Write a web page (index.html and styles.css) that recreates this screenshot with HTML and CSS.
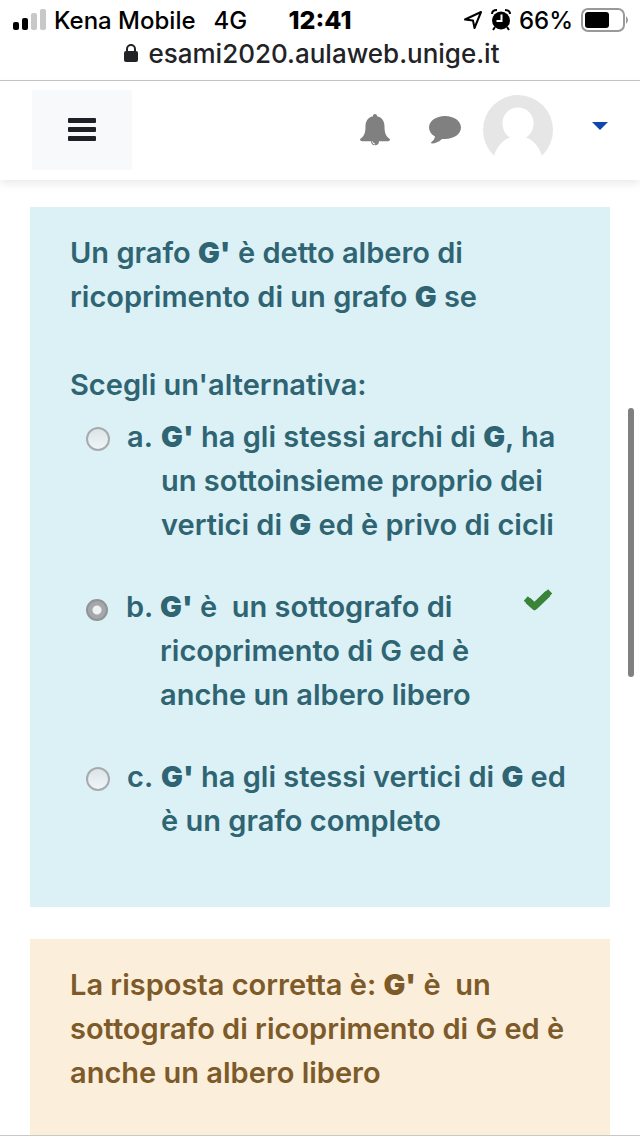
FILE: index.html
```html
<!DOCTYPE html>
<html lang="it">
<head>
<meta charset="utf-8">
<meta name="viewport" content="width=device-width, initial-scale=1">
<title>esami2020.aulaweb.unige.it</title>
<link rel="stylesheet" href="styles.css">
</head>
<body>
<div class="screen">
  <header class="browser">
    <div class="status">
      <div class="status-side">
        <svg class="signal" width="34" height="22" viewBox="0 0 34 22" aria-hidden="true">
          <rect x="1" y="13" width="6" height="8" rx="2"/>
          <rect x="10" y="9" width="6" height="12" rx="2"/>
          <rect x="19" y="4" width="6" height="17" rx="2" fill="#c8c8c8"/>
          <rect x="28" y="0" width="6" height="21" rx="2" fill="#c8c8c8"/>
        </svg>
        <span>Kena Mobile</span>
        <span class="network">4G</span>
      </div>
      <span class="clock">12:41</span>
      <div class="status-side status-end">
        <svg width="20" height="20" viewBox="0 0 20 20" aria-hidden="true"><path d="M18 2 11.500 18 10 10.500 2 9.500Z" fill="none" stroke="#000" stroke-width="2" stroke-linejoin="round"/></svg>
        <svg width="20" height="22" viewBox="0 0 20 22" aria-hidden="true">
          <circle cx="10" cy="11.500" r="9"/>
          <path d="M1 5Q1 1 6 1M19 5Q19 1 14 1M4 18l-2 3M16 18l2 3" fill="none" stroke="#000" stroke-width="2"/>
          <path d="M10.500 5.500V12H5.500" fill="none" stroke="#fff" stroke-width="2"/>
        </svg>
        <span>66%</span>
        <svg width="47" height="24" viewBox="0 0 47 24" aria-hidden="true">
          <rect x="1" y="1" width="42" height="22" rx="6" fill="none" stroke="#999" stroke-width="2"/>
          <rect x="4" y="4" width="24" height="16" rx="3"/>
          <path d="M45 8q4 4 0 8z" fill="#999"/>
        </svg>
      </div>
    </div>
    <div class="address">
      <svg width="14" height="18" viewBox="0 0 14 18" aria-hidden="true"><rect x="0" y="7" width="14" height="11" rx="2" fill="#222326"/><path d="M3 8V5a4 4 0 0 1 8 0v3" fill="none" stroke="#222326" stroke-width="2"/></svg>
      <span>esami2020.aulaweb.unige.it</span>
    </div>
  </header>

  <nav class="navbar">
    <button class="menu" type="button" aria-label="Menu">
      <svg width="28" height="24" viewBox="0 0 28 24" fill="#1d2125"><rect y="0" width="28" height="5" rx="1"/><rect y="9" width="28" height="5" rx="1"/><rect y="18" width="28" height="5" rx="1"/></svg>
    </button>
    <div class="tools">
      <button class="bell" type="button" aria-label="Notifiche">
        <svg width="30" height="32" viewBox="0 0 30 32"><path d="M15 0c1.500 0 2.300 1 2 2.300 5 1 7.500 5 7.500 10 0 7 1.500 10 5.500 13 0 1.300-1 2-2 2H19a4 4 0 0 1-8 0H2c-1 0-2-.7-2-2 4-3 5.500-6 5.500-13 0-5 2.500-9 7.500-10C12.700 1 13.500 0 15 0Z" fill="#808080"/><path d="M12.500 27.500a2.500 2.500 0 0 0 2.500 2.500" fill="none" stroke="#fff" stroke-width="1"/></svg>
      </button>
      <button type="button" aria-label="Messaggi">
        <svg width="32" height="28" viewBox="0 0 32 28"><path d="M16 0c9 0 16 5 16 11.500S25 23 16 23h-3c-3 3-7 4.300-10 4.500-1 0-1.300-1-.5-1.500C4.500 24.500 5.500 23 6 20.500 2 18.500 0 15 0 11.500 0 5 7 0 16 0Z" fill="#808080"/></svg>
      </button>
      <button class="user" type="button" aria-label="Menu utente">
        <svg width="70" height="70" viewBox="0 0 70 70"><circle cx="35" cy="35" r="35" fill="#e6e6e6"/><path d="M11 61C14 51 20 45 27 42.500 22 39.500 19.500 34 19.500 28a15.500 15.500 0 0 1 31 0c0 6-2.500 11.500-7.500 14.500C50 45 56 51 59 61V70H11Z" fill="#fff"/></svg>
        <svg width="16" height="8" viewBox="0 0 16 8"><path d="M0 0h16L8 8Z" fill="#0f47ad"/></svg>
      </button>
    </div>
  </nav>

  <main class="content">
    <form class="card question">
      <p>Un grafo <b>G'</b> è detto albero di ricoprimento di un grafo <b>G</b> se</p>
      <fieldset class="choices">
        <legend>Scegli un'alternativa:</legend>
        <div class="choice">
          <input type="radio" name="answer" id="a">
          <label for="a"><span>a.</span><span><b>G'</b> ha gli stessi archi di <b>G</b>, ha un sottoinsieme proprio dei vertici di <b>G</b> ed è privo di cicli</span></label>
        </div>
        <div class="choice">
          <input type="radio" name="answer" id="b" checked>
          <label for="b"><span>b.</span><span><b>G'</b> è&nbsp; un sottografo di ricoprimento di G ed è anche un albero libero</span></label>
          <svg class="check" width="28" height="22" viewBox="0 0 28 22" role="img" aria-label="Corretto"><path d="M4 11.500 10.500 17.500 24 4.500" fill="none" stroke="#398439" stroke-width="7" stroke-linejoin="round" stroke-linecap="butt"/><path d="M4 11.500 10.500 17.500 24 4.500" fill="none" stroke="#398439" stroke-width="6" stroke-linecap="square"/></svg>
        </div>
        <div class="choice">
          <input type="radio" name="answer" id="c">
          <label for="c"><span>c.</span><span><b>G'</b> ha gli stessi vertici di <b>G</b> ed è un grafo completo</span></label>
        </div>
      </fieldset>
    </form>
    <section class="card feedback">
      <p>La risposta corretta è: <b>G'</b> è&nbsp; un sottografo di ricoprimento di G ed è anche un albero libero</p>
    </section>
    <div class="scrollbar"></div>
  </main>
</div>
</body>
</html>
```

FILE: styles.css
```css
* { box-sizing: border-box; }
body {
  margin: 0;
  background: #fff;
  font-family: Inter, "Liberation Sans", sans-serif;
  font-weight: 500;
}
p { margin: 0; }
b { font-weight: 900; }
svg { display: block; flex: none; }
button { border: 0; padding: 0; background: none; cursor: pointer; }

.screen { border-bottom: 1px solid #c8c8c8; }

.browser { height: 81px; border-bottom: 1px solid #c4c4c4; }
.status {
  display: grid;
  grid-template-columns: 1fr auto 1fr;
  align-items: center;
  height: 40px;
  padding: 0 12px;
  font-size: 24px;
  color: #000;
}
.status-side { display: flex; align-items: center; gap: 8px; white-space: nowrap; }
.status-end { justify-content: flex-end; }
.network { margin-left: 10px; }
.clock { font-size: 25px; font-weight: 800; }
.address {
  display: flex;
  justify-content: center;
  align-items: center;
  gap: 10px;
  height: 26px;
  padding-right: 16px;
  font-size: 26px;
  font-weight: 500;
  color: #222326;
}

.navbar {
  display: flex;
  justify-content: space-between;
  align-items: center;
  height: 99px;
  padding: 0 32px 2px;
  box-shadow: 0 4px 8px rgba(0, 0, 0, 0.08);
}
.menu {
  display: grid;
  place-items: center;
  width: 100px;
  height: 80px;
  background: #f8f9fa;
}
.tools { display: flex; align-items: center; }
.bell { margin-right: 39px; }
.user { display: flex; align-items: center; gap: 39px; margin-left: 22px; }
.user svg:last-child { margin-bottom: 8px; }

.content {
  position: relative;
  display: flex;
  flex-direction: column;
  gap: 32px;
  padding: 27px 30px 0;
}
.card { padding: 24px 40px; font-size: 29px; font-weight: 600; line-height: 44px; }
.question { padding-bottom: 26px; background: #dcf1f6; color: #2f6473; }
.feedback { padding-bottom: 40px; background: #fbeedb; color: #7d5a29; }

.choices { min-width: 0; margin: 44px 0 0; padding: 0; border: 0; }
.choices legend { padding: 0; margin-bottom: 8px; }
.choice { display: flex; align-items: flex-start; padding-left: 16px; margin-bottom: 38px; }
.choice label { display: grid; grid-template-columns: 34px 1fr; flex: 1; }
.choice input {
  appearance: none;
  flex: none;
  width: 24px;
  height: 24px;
  margin: 12px 17px 0 0;
  border: 2px solid #a5abae;
  border-radius: 50%;
  background: linear-gradient(#dce4e8, #f0f5f7);
}
.choice input:checked {
  width: 22px;
  height: 22px;
  margin: 14px 18px 0 0;
  border-color: #909497;
  background: radial-gradient(circle, #eef2f4 0 4px, #a4a8aa 5px);
}
.check { margin: 4px 18px 0 32px; }

.scrollbar {
  position: absolute;
  top: 228px;
  right: 6px;
  width: 6px;
  height: 269px;
  border-radius: 3px;
  background: #808080;
}
```
